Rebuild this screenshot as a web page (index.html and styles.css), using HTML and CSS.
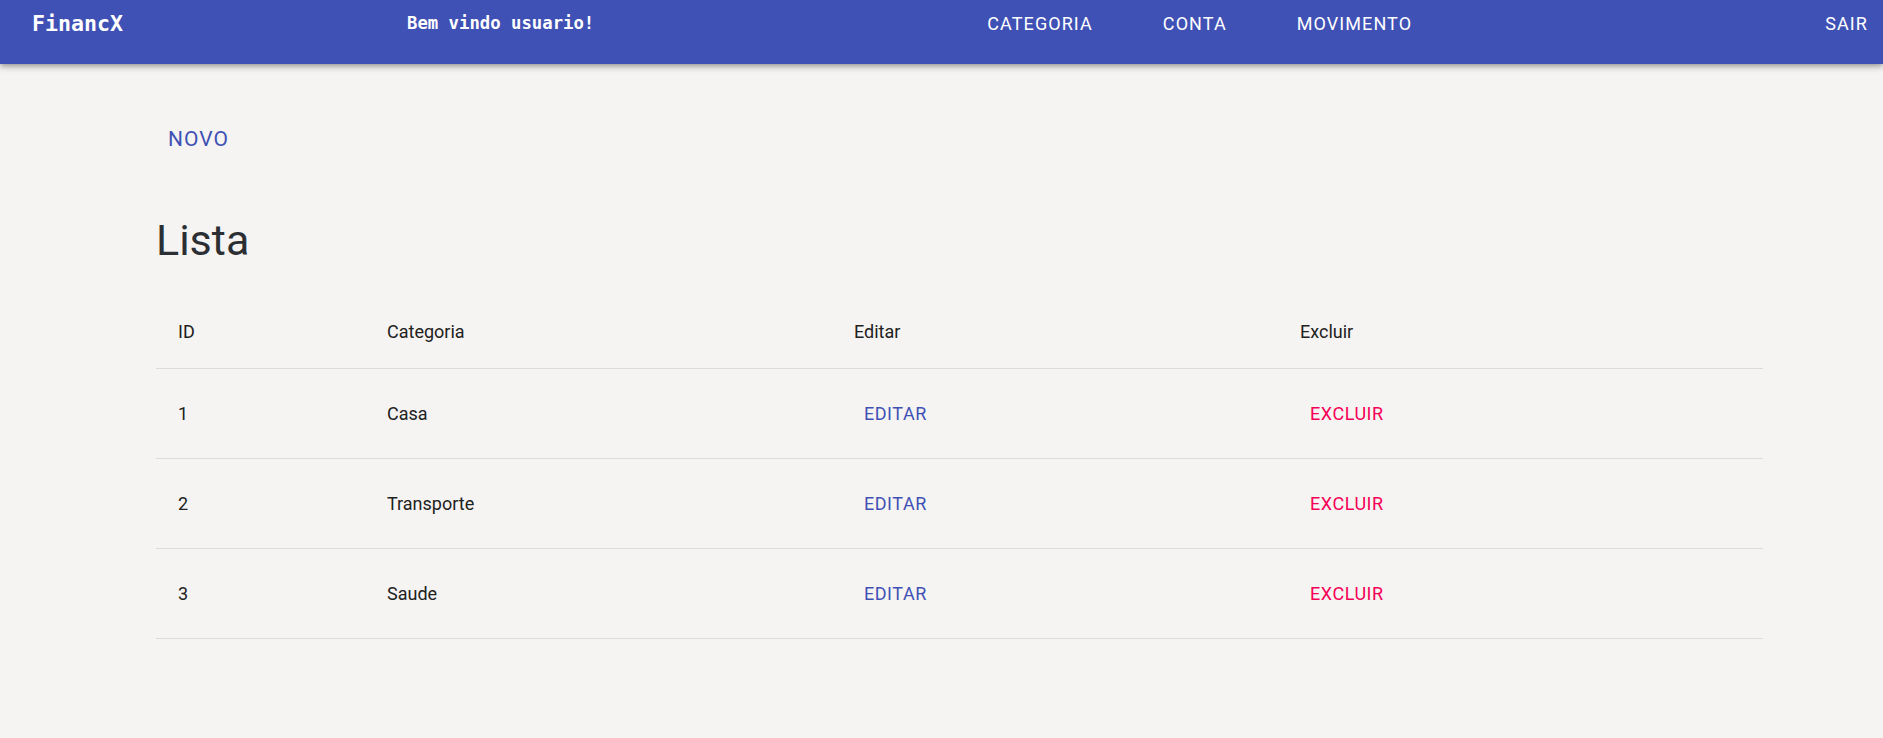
FILE: index.html
```html
<!DOCTYPE html>
<html lang="pt">
<head>
<meta charset="utf-8">
<title>FinancX</title>
<link rel="stylesheet" href="styles.css">
</head>
<body>
<header class="app-bar">
  <div class="toolbar">
    <div class="brand">FinancX</div>
    <div class="greeting">Bem vindo usuario!</div>
    <nav class="nav">
      <a class="nav-link">CATEGORIA</a>
      <a class="nav-link">CONTA</a>
      <a class="nav-link">MOVIMENTO</a>
    </nav>
    <a class="nav-link logout">SAIR</a>
  </div>
</header>
<main class="content">
  <div class="actions">
    <button class="btn-new">NOVO</button>
  </div>
  <h1 class="title">Lista</h1>
  <div class="table">
    <div class="row head">
      <div class="cell">ID</div>
      <div class="cell">Categoria</div>
      <div class="cell">Editar</div>
      <div class="cell">Excluir</div>
    </div>
    <div class="row">
      <div class="cell">1</div>
      <div class="cell">Casa</div>
      <div class="cell"><button class="btn-text edit">EDITAR</button></div>
      <div class="cell"><button class="btn-text delete">EXCLUIR</button></div>
    </div>
    <div class="row">
      <div class="cell">2</div>
      <div class="cell">Transporte</div>
      <div class="cell"><button class="btn-text edit">EDITAR</button></div>
      <div class="cell"><button class="btn-text delete">EXCLUIR</button></div>
    </div>
    <div class="row">
      <div class="cell">3</div>
      <div class="cell">Saude</div>
      <div class="cell"><button class="btn-text edit">EDITAR</button></div>
      <div class="cell"><button class="btn-text delete">EXCLUIR</button></div>
    </div>
  </div>
</main>
</body>
</html>
```
FILE: styles.css
```css
* { box-sizing: border-box; }

html, body {
  margin: 0;
  padding: 0;
  background: #f5f4f2;
  font-family: Roboto, "Liberation Sans", Arial, sans-serif;
  color: #212121;
  height: 100%;
}

.app-bar {
  height: 64px;
  background: #3f51b5;
  box-shadow: 0 2px 4px -1px rgba(0,0,0,.2), 0 4px 5px 0 rgba(0,0,0,.14), 0 1px 10px 0 rgba(0,0,0,.12);
  position: relative;
  z-index: 2;
}

.toolbar {
  height: 46px;
  display: flex;
  align-items: center;
  padding: 0 15px 0 32px;
  color: #fff;
}

.brand {
  width: 375px;
  font-family: "DejaVu Sans Mono", "Liberation Mono", monospace;
  font-weight: bold;
  font-size: 21.6px;
}

.greeting {
  font-family: "DejaVu Sans Mono", "Liberation Mono", monospace;
  font-weight: bold;
  font-size: 17.3px;
}

.nav {
  display: flex;
  gap: 70px;
  margin-left: 393px;
}

.nav-link {
  font-size: 18px;
  letter-spacing: 0.06em;
  text-transform: uppercase;
  color: #fff;
  cursor: pointer;
}

.logout {
  margin-left: auto;
}

.content {
  margin-left: 156px;
  width: 1607px;
}

.actions {
  padding-top: 57px;
}

.btn-new {
  height: 36px;
  line-height: 36px;
  padding: 0 12px;
  border: 0;
  background: transparent;
  color: #3f51b5;
  font-family: Roboto, sans-serif;
  font-size: 21px;
  letter-spacing: 0.05em;
  cursor: pointer;
}

.title {
  margin: 57px 0 0 0;
  font-size: 43px;
  line-height: 52px;
  font-weight: 400;
  color: #2b2f33;
}

.table {
  margin-top: 28px;
}

.row {
  display: grid;
  grid-template-columns: 209px 467px 446px 485px;
  height: 90px;
  align-items: center;
  border-bottom: 1px solid #dddcda;
  font-size: 18px;
}

.row.head {
  height: 75px;
}

.cell {
  padding: 0 22px;
}

.btn-text {
  border: 0;
  background: transparent;
  padding: 0 10px;
  font-family: Roboto, sans-serif;
  font-size: 18px;
  letter-spacing: 0.03em;
  cursor: pointer;
}

.edit { color: #3f51b5; }
.delete { color: #f50057; }
```
